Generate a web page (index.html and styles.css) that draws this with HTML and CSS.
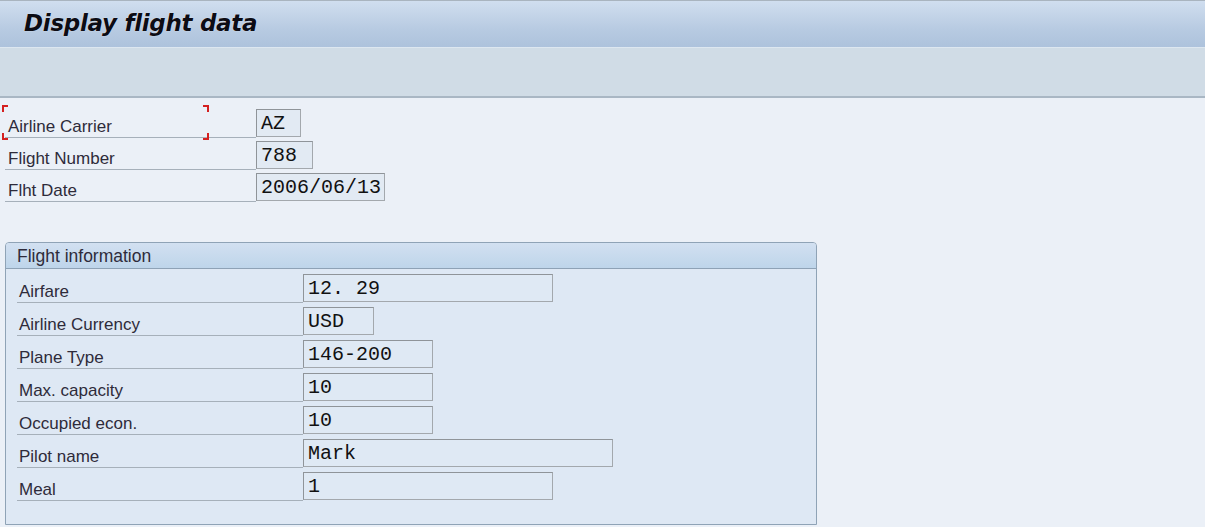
FILE: index.html
```html
<!DOCTYPE html>
<html lang="en">

<head>
    <meta charset="UTF-8">
    <title>Display flight data</title>
    <link rel="stylesheet" href="styles.css">
</head>

<body>
    <header class="titlebar">
        <h1>Display flight data</h1>
    </header>
    <div class="toolbar"></div>

    <main class="screen">
        <div class="fields">
            <div class="row">
                <label class="lbl focus">Airline Carrier
                    <span class="corner tl"></span><span class="corner tr"></span>
                    <span class="corner bl"></span><span class="corner br"></span>
                </label>
                <span class="val w2">AZ</span>
            </div>
            <div class="row">
                <label class="lbl">Flight Number</label>
                <span class="val w3">788</span>
            </div>
            <div class="row">
                <label class="lbl">Flht Date</label>
                <span class="val w10">2006/06/13</span>
            </div>
        </div>

        <section class="group">
            <div class="group-head">Flight information</div>
            <div class="group-body">
                <div class="row">
                    <label class="lbl">Airfare</label>
                    <span class="val wl">12. 29</span>
                </div>
                <div class="row">
                    <label class="lbl">Airline Currency</label>
                    <span class="val ws">USD</span>
                </div>
                <div class="row">
                    <label class="lbl">Plane Type</label>
                    <span class="val wm">146-200</span>
                </div>
                <div class="row">
                    <label class="lbl">Max. capacity</label>
                    <span class="val wm">10</span>
                </div>
                <div class="row">
                    <label class="lbl">Occupied econ.</label>
                    <span class="val wm">10</span>
                </div>
                <div class="row">
                    <label class="lbl">Pilot name</label>
                    <span class="val wx">Mark</span>
                </div>
                <div class="row">
                    <label class="lbl">Meal</label>
                    <span class="val wl">1</span>
                </div>
            </div>
        </section>
    </main>
</body>

</html>
```

FILE: styles.css
```css
*,
::before,
::after {
    margin: 0;
    padding: 0;
    box-sizing: border-box;
}

html,
body {
    height: 100%;
}

body {
    font: 17px/1.2 "Liberation Sans", Arial, sans-serif;
    background: #ebf0f7;
    color: #2e2b3a;
    overflow: hidden;
}

/* title and toolbar */

.titlebar {
    height: 47px;
    border-top: 1px solid #a9b4bf;
    background: linear-gradient(#d0deef, #b8cbe2 60%, #adc2dc);
    padding: 9px 0 0 24px;
}

.titlebar h1 {
    font: italic bold 23px/1.2 "DejaVu Sans", Verdana, sans-serif;
    color: #0c0c14;
    letter-spacing: -0.3px;
    text-shadow: 0 0 1px #fff;
}

.toolbar {
    height: 51px;
    background: #d0dce6;
    border-top: 1px solid #dde7f0;
    border-bottom: 2px solid #a9b7c4;
}

/* screen area */

.screen {
    padding: 8px 0 0 5px;
}

.row {
    display: flex;
    align-items: flex-end;
    height: 32px;
}

.lbl {
    position: relative;
    display: flex;
    align-items: center;
    height: 32px;
    padding: 12px 0 0 3px;
    border-bottom: 1px solid #a6b0ba;
}

.fields .lbl {
    width: 251px;
}

.val {
    display: block;
    height: 28px;
    margin-bottom: 1px;
    padding: 2px 0 0 4px;
    font: 20px/24px "Liberation Mono", "Courier New", monospace;
    color: #111;
    background: #e2eaf3;
    border: 1px solid #a3a8ad;
    border-top-color: #8f9499;
    border-left-color: #8f9499;
    white-space: pre;
}

.w2 {
    width: 45px;
}

.w3 {
    width: 57px;
}

.w10 {
    width: 129px;
}

/* focus corners */

.corner {
    position: absolute;
    width: 6px;
    height: 7px;
    border: 0 solid #d42020;
}

.tl {
    left: -3px;
    top: -1px;
    border-width: 2px 0 0 2px;
}

.tr {
    right: 47px;
    top: -1px;
    border-width: 2px 2px 0 0;
}

.bl {
    left: -3px;
    bottom: -3px;
    border-width: 0 0 2px 2px;
}

.br {
    right: 47px;
    bottom: -3px;
    border-width: 0 2px 2px 0;
}

/* group box */

.group {
    width: 812px;
    margin-top: 40px;
    height: 283px;
    border: 1px solid #8fa3b6;
    border-radius: 4px 4px 0 0;
    background: #dee8f4;
}

.group-head {
    height: 26px;
    padding: 3px 0 0 11px;
    font-size: 17.5px;
    background: linear-gradient(#d2e0f1, #bed5ea);
    border-bottom: 1px solid #8ea2b6;
    border-radius: 3px 3px 0 0;
}

.group-body {
    padding: 1px 0 0 11px;
}

.group-body .row {
    height: 33px;
}

.group-body .lbl {
    width: 286px;
    height: 33px;
    padding-left: 2px;
}

.group-body .val {
    background: #dfe9f4;
}

.ws {
    width: 71px;
}

.wm {
    width: 130px;
}

.wl {
    width: 250px;
}

.wx {
    width: 310px;
}
```
